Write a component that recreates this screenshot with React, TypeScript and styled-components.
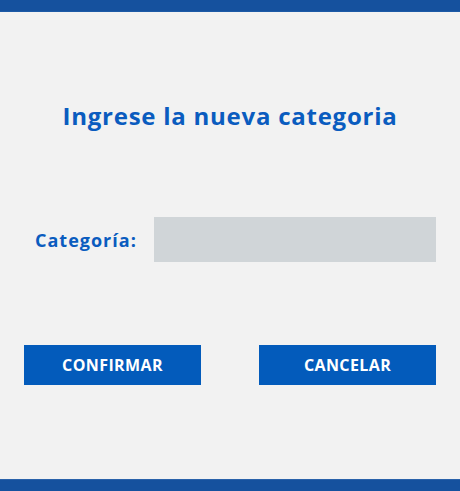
import { createGlobalStyle, styled } from "styled-components";

const GlobalStyle = createGlobalStyle`
  html, body {
    margin: 0;
    padding: 0;
    background: #f2f2f2;
  }
  body {
    font-family: "Open Sans", "Noto Sans", sans-serif;
  }
`;

const Page = styled.div`
  width: 460px;
  height: 491px;
  display: flex;
  flex-direction: column;
  background: #f2f2f2;
`;

const Bar = styled.div<{ $bottom?: boolean }>`
  height: 12px;
  background: #15519e;
  border-bottom: ${(p) => (p.$bottom ? "none" : "1px solid #1d5aa6")};
  border-top: ${(p) => (p.$bottom ? "1px solid #2a62aa" : "none")};
  box-sizing: border-box;
`;

const Main = styled.main`
  flex: 1;
  padding: 0 24px;
  display: flex;
  flex-direction: column;
`;

const Title = styled.h1`
  margin: 89px 0 0;
  font-size: 24px;
  line-height: 30px;
  font-weight: 700;
  letter-spacing: 0.75px;
  color: #0a5cbf;
  text-align: center;
`;

const Row = styled.div`
  margin-top: 86px;
  display: flex;
  align-items: center;
  gap: 17px;
  height: 45px;
`;

const Label = styled.label`
  padding-left: 11px;
  width: 102px;
  font-size: 18px;
  font-weight: 700;
  letter-spacing: 1px;
  color: #0a5cbf;
  white-space: nowrap;
`;

const Input = styled.input`
  flex: 1;
  height: 45px;
  border: 0;
  outline: none;
  background: #d0d5d8;
  box-sizing: border-box;
  padding: 0 10px;
  font: inherit;
`;

const Buttons = styled.div`
  margin-top: 83px;
  display: flex;
  justify-content: space-between;
`;

const Button = styled.button`
  width: 177px;
  height: 40px;
  border: 0;
  background: #035bbb;
  color: #fff;
  font-family: inherit;
  font-size: 16px;
  font-weight: 700;
  letter-spacing: 0.4px;
  text-transform: uppercase;
  cursor: pointer;
`;

export default function App() {
  return (
    <Page>
      <GlobalStyle />
      <Bar />
      <Main>
        <Title>Ingrese la nueva categoria</Title>
        <Row>
          <Label htmlFor="categoria">Categoría:</Label>
          <Input id="categoria" type="text" />
        </Row>
        <Buttons>
          <Button>Confirmar</Button>
          <Button>Cancelar</Button>
        </Buttons>
      </Main>
      <Bar $bottom />
    </Page>
  );
}
